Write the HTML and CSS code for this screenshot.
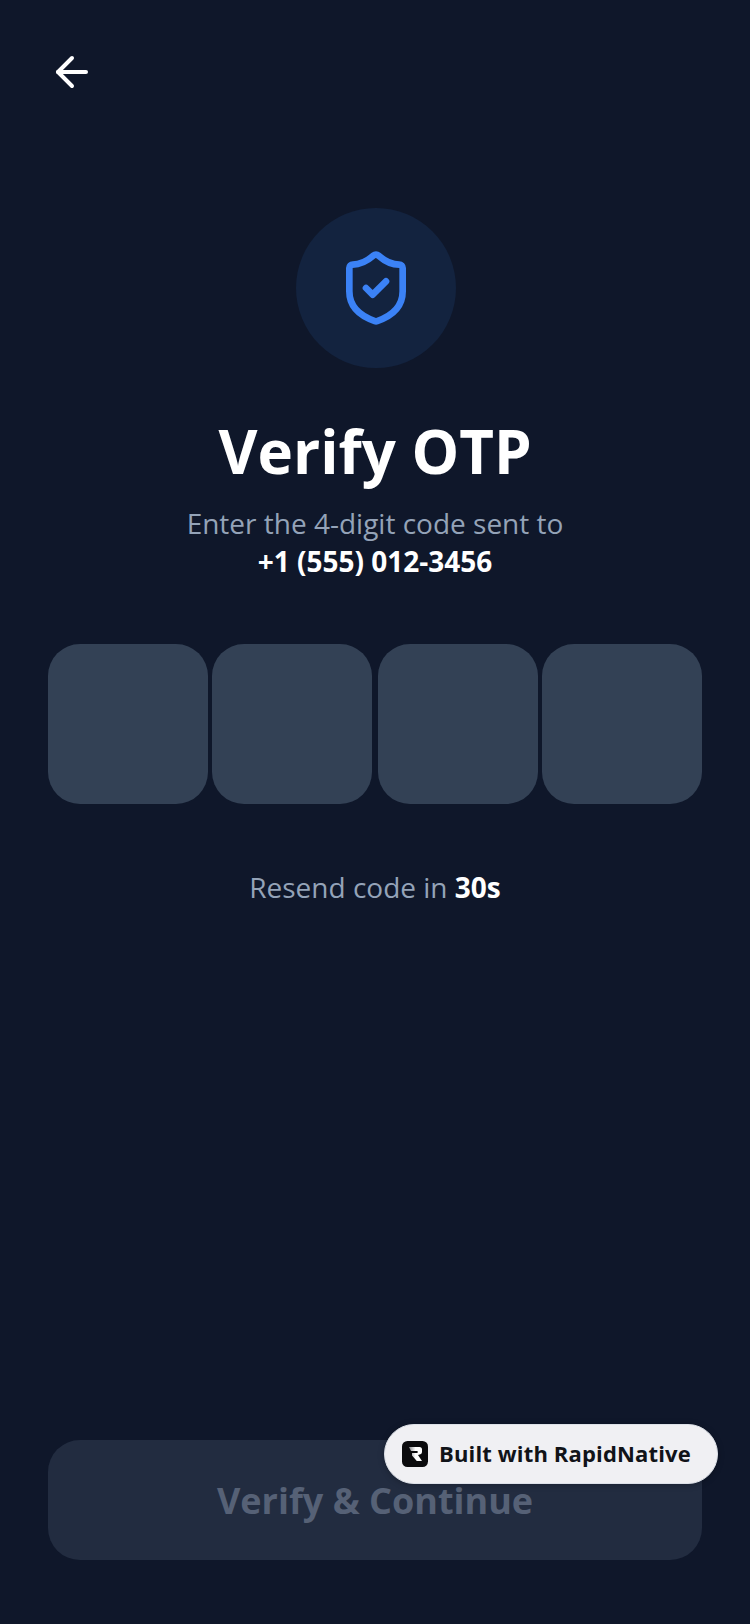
FILE: index.html
```html
<!DOCTYPE html>
<html lang="en">
<head>
    <meta charset="UTF-8">
    <meta name="viewport" content="width=device-width, initial-scale=1.0">
    <title>Verify OTP</title>
    <link rel="stylesheet" href="styles.css">
</head>
<body>
    <div class="screen">
        <button class="back" aria-label="Back">
            <svg width="48" height="48" viewBox="0 0 24 24" fill="none" stroke="#fff" stroke-width="2" stroke-linecap="round" stroke-linejoin="round">
                <path d="M19 12H5"/>
                <path d="M12 19l-7-7 7-7"/>
            </svg>
        </button>

        <div class="shield-circle">
            <svg width="80" height="80" viewBox="0 0 24 24" fill="none" stroke="#3b82f6" stroke-width="2" stroke-linecap="round" stroke-linejoin="round">
                <path d="M20 13c0 5-3.5 7.5-7.66 8.95a1 1 0 0 1-.67-.01C7.5 20.5 4 18 4 13V6a1 1 0 0 1 1-1c2 0 4.5-1.2 6.24-2.72a1.17 1.17 0 0 1 1.52 0C14.51 3.81 17 5 19 5a1 1 0 0 1 1 1z"/>
                <path d="M9 12l2 2 4-4"/>
            </svg>
        </div>

        <h1 class="title">Verify OTP</h1>
        <p class="subtitle">Enter the 4-digit code sent to</p>
        <p class="phone">+1 (555) 012-3456</p>

        <div class="otp-row">
            <div class="otp-box"></div>
            <div class="otp-box"></div>
            <div class="otp-box"></div>
            <div class="otp-box"></div>
        </div>

        <p class="resend">Resend code in <strong>30s</strong></p>

        <button class="verify" disabled>Verify &amp; Continue</button>
    </div>

    <div class="badge">
        <svg class="badge-logo" width="26" height="26" viewBox="0 0 26 26">
            <defs>
                <linearGradient id="logo-fade" x1="0" y1="0" x2="1" y2="0">
                    <stop offset="0" stop-color="#8a8a8e"/>
                    <stop offset="0.5" stop-color="#fff"/>
                </linearGradient>
            </defs>
            <rect width="26" height="26" rx="5.5" fill="#0b0b0d"/>
            <path d="M7 6h10.5a2.5 2.5 0 0 1 2.5 2.5v2.4a2.5 2.5 0 0 1-1.6 2.3l-2.4.9L20 20h-5.2L10 14.6V12h5.6V10H9z" fill="url(#logo-fade)"/>
        </svg>
        <span class="badge-text">Built with RapidNative</span>
    </div>
</body>
</html>
```

FILE: styles.css
```css
html, body {
    margin: 0;
    padding: 0;
}
body {
    width: 750px;
    height: 1624px;
    background: #0f172a;
    font-family: "Open Sans", sans-serif;
    position: relative;
    overflow: hidden;
}
p, h1 {
    margin: 0;
}
.screen {
    height: 1624px;
    box-sizing: border-box;
    padding: 0 48px 64px;
    display: flex;
    flex-direction: column;
    align-items: center;
}
.back {
    align-self: flex-start;
    margin: 48px 0 0;
    padding: 0;
    width: 48px;
    height: 48px;
    background: none;
    border: 0;
}
.back svg {
    display: block;
}
.shield-circle {
    margin: 112px 0 0 2px;
    width: 160px;
    height: 160px;
    border-radius: 50%;
    background: #13233f;
    display: flex;
    align-items: center;
    justify-content: center;
}
.title {
    margin-top: 39px;
    font-size: 60px;
    line-height: 88px;
    font-weight: 700;
    color: #fff;
}
.subtitle {
    margin-top: 9px;
    font-size: 28px;
    line-height: 38px;
    color: #94a3b8;
}
.phone {
    font-size: 28px;
    line-height: 38px;
    font-weight: 700;
    color: #fff;
}
.otp-row {
    margin-top: 64px;
    width: 100%;
    display: flex;
    gap: 4px;
}
.otp-box {
    width: 160px;
    height: 160px;
    border-radius: 32px;
    background: #334155;
}
.otp-box:nth-child(3) {
    margin-left: auto;
}
.resend {
    margin-top: 64px;
    font-size: 28px;
    line-height: 38px;
    color: #94a3b8;
}
.resend strong {
    font-weight: 700;
    color: #fff;
}
.verify {
    margin-top: auto;
    width: 100%;
    height: 120px;
    border: 0;
    border-radius: 32px;
    background: #222c40;
    color: #566176;
    font-family: inherit;
    font-size: 36px;
    font-weight: 700;
}
.badge {
    position: absolute;
    left: 384px;
    top: 1424px;
    width: 334px;
    height: 60px;
    box-sizing: border-box;
    padding-left: 17px;
    display: flex;
    align-items: center;
    gap: 11px;
    border: 1px solid #dde1e8;
    border-radius: 30px;
    background: #f0f0f3;
    box-shadow: 0 1px 6px rgba(0, 0, 0, 0.25);
    color: #111318;
    font-size: 22px;
    font-weight: 700;
    letter-spacing: 0.15px;
    white-space: nowrap;
}
.badge-text {
    padding-bottom: 2px;
}
```
